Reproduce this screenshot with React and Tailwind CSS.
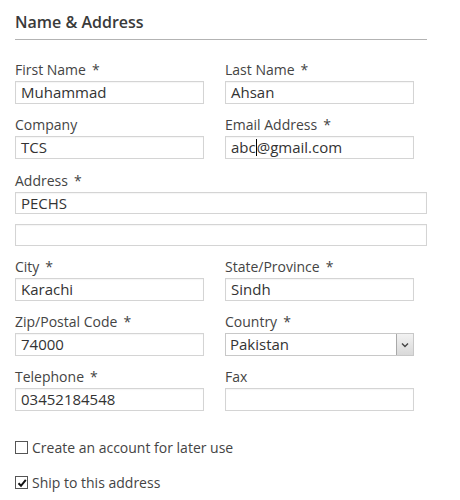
import React from "react";

const font = { fontFamily: '"Open Sans", "Liberation Sans", sans-serif' };

function Label({ children, req }) {
  return (
    <div className="h-[19px] text-[14px] leading-[19px] text-[#444]">
      {children}
      {req && <span className="ml-[6px]">*</span>}
    </div>
  );
}

function TextBox({ value, className = "", children }) {
  return (
    <div
      className={`mt-[2px] flex h-[23px] items-center border border-[#d4d4d4] bg-white px-[5px] text-[15px] leading-[21px] text-[#333] shadow-[inset_0_1px_1px_rgba(0,0,0,0.04)] ${className}`}
    >
      {children ?? value}
    </div>
  );
}

function Field({ label, req, value, children }) {
  return (
    <div className="w-[189px]">
      <Label req={req}>{label}</Label>
      {children ?? <TextBox value={value} />}
    </div>
  );
}

function Check({ checked, children }) {
  return (
    <div className="flex items-center gap-[4px] text-[14px] leading-[19px] text-[#444]">
      <span className="flex h-[13px] w-[13px] items-center justify-center border border-[#555] bg-white">
        {checked && (
          <svg width="10" height="10" viewBox="0 0 10 10">
            <path d="M1.5 5.2 L4 7.8 L8.8 1.8" fill="none" stroke="#111" strokeWidth="2" />
          </svg>
        )}
      </span>
      {children}
    </div>
  );
}

export default function App() {
  return (
    <div style={font} className="h-[500px] w-[460px] bg-white pl-[15px]">
      {/* Section heading */}
      <div className="w-[412px] border-b border-[#b3b3b3] pt-[11px] pb-[5px]">
        <h2 className="text-[16px] font-semibold leading-[23px] text-[#3a3a3a]">Name &amp; Address</h2>
      </div>

      <div className="mt-[20px] flex flex-col gap-[11px]">
        <div className="flex gap-[21px]">
          <Field label="First Name" req value="Muhammad" />
          <Field label="Last Name" req value="Ahsan" />
        </div>
        <div className="flex gap-[21px]">
          <Field label="Company" value="TCS" />
          <Field label="Email Address" req>
            <TextBox>
              abc<span className="inline-block h-[17px] w-px bg-black" />@gmail.com
            </TextBox>
          </Field>
        </div>
        <div className="mt-[1px] w-[412px]">
          <Label req>Address</Label>
          <TextBox value="PECHS" className="!h-[22px]" />
          <TextBox value="" className="!mt-[10px] !h-[22px]" />
        </div>
        <div className="flex gap-[21px]">
          <Field label="City" req value="Karachi" />
          <Field label="State/Province" req value="Sindh" />
        </div>
        <div className="flex gap-[21px]">
          <Field label="Zip/Postal Code" req value="74000" />
          <Field label="Country" req>
            <div className="mt-[2px] flex h-[23px] items-center justify-between border border-[#c8c8c8] bg-white pl-[4px] text-[15px] leading-[21px] text-[#333]">
              <span>Pakistan</span>
              <span className="flex h-full w-[17px] items-center justify-center border-l border-[#a9a9a9] bg-gradient-to-b from-[#f2f2f2] to-[#d9d9d9]">
                <svg width="8" height="6" viewBox="0 0 8 6">
                  <path d="M1 1.5 L4 4.5 L7 1.5" fill="none" stroke="#444" strokeWidth="1.4" />
                </svg>
              </span>
            </div>
          </Field>
        </div>
        <div className="flex gap-[21px]">
          <Field label="Telephone" req value="03452184548" />
          <Field label="Fax" value="" />
        </div>
      </div>

      <div className="mt-[27px] flex flex-col gap-[16px]">
        <Check>Create an account for later use</Check>
        <Check checked>Ship to this address</Check>
      </div>
    </div>
  );
}
